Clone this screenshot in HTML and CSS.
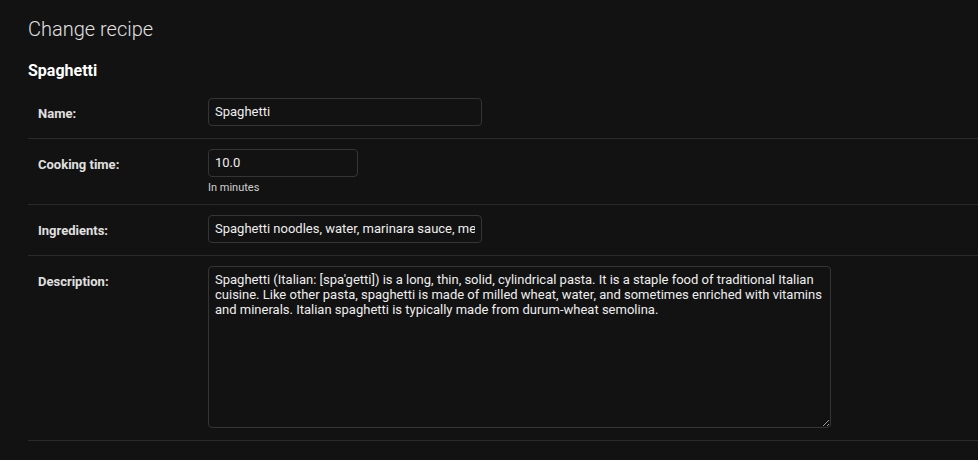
FILE: index.html
```html
<!DOCTYPE html>
<html lang="en">
<head>
<meta charset="utf-8">
<title>Change recipe</title>
<link rel="stylesheet" href="styles.css">
</head>
<body>
<div class="content">
  <h1 class="title">Change recipe</h1>
  <h2 class="subtitle">Spaghetti</h2>
  <form class="form">
    <div class="form-row">
      <div class="field">
        <label class="label" for="id_name">Name:</label>
        <input class="input input-text" id="id_name" type="text" value="Spaghetti">
      </div>
    </div>
    <div class="form-row">
      <div class="field">
        <label class="label" for="id_time">Cooking time:</label>
        <input class="input input-number" id="id_time" type="text" value="10.0">
      </div>
      <div class="help">In minutes</div>
    </div>
    <div class="form-row">
      <div class="field">
        <label class="label" for="id_ing">Ingredients:</label>
        <input class="input input-text" id="id_ing" type="text" value="Spaghetti noodles, water, marinara sauce, meatballs">
      </div>
    </div>
    <div class="form-row">
      <div class="field">
        <label class="label" for="id_desc">Description:</label>
        <textarea class="input textarea" id="id_desc">Spaghetti (Italian: [spa'getti]) is a long, thin, solid, cylindrical pasta. It is a staple food of traditional Italian cuisine. Like other pasta, spaghetti is made of milled wheat, water, and sometimes enriched with vitamins and minerals. Italian spaghetti is typically made from durum-wheat semolina.</textarea>
      </div>
    </div>
  </form>
</div>
</body>
</html>
```
FILE: styles.css
```css
html {
  color-scheme: dark;
  background: #121212;
}
body {
  margin: 0;
  background: #121212;
  color: #eeeeee;
  font-family: Roboto, "Liberation Sans", sans-serif;
}
.content {
  padding: 18px 0 0 28px;
}
.title {
  margin: 0;
  font-size: 20px;
  font-weight: 300;
  line-height: 23px;
  color: #e0e0e0;
}
.subtitle {
  margin: 20px 0 8px;
  font-size: 16px;
  font-weight: 700;
  line-height: 19px;
  color: #ffffff;
}
.form-row {
  padding: 10px;
  border-bottom: 1px solid #2a2a2a;
}
.field {
  display: flex;
  align-items: flex-start;
}
.label {
  box-sizing: border-box;
  width: 170px;
  flex: none;
  padding: 8px 10px 0 0;
  font-size: 13px;
  font-weight: 700;
  color: #e0e0e0;
}
.input {
  margin: 0 0 2px;
  padding: 5px 6px;
  border: 1px solid #353535;
  border-radius: 4px;
  background: #121212;
  color: #eeeeee;
  font-family: Roboto, "Liberation Sans", sans-serif;
  font-size: 13px;
  line-height: 16px;
  height: 16px;
  outline: none;
}
.input-text {
  width: 260px;
}
.input-number {
  width: 136px;
}
.textarea {
  width: 609px;
  height: 150px;
  resize: both;
  line-height: 15.2px;
}
.help {
  margin: 2px 0 0 170px;
  font-size: 11px;
  line-height: 13px;
  color: #d0d0d0;
}
```
